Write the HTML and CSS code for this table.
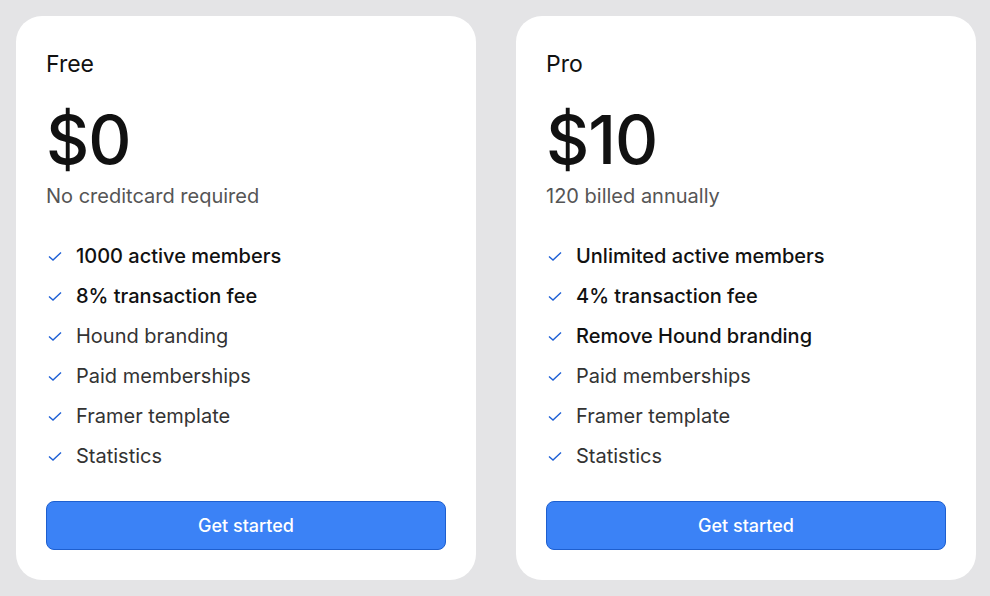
FILE: index.html
```html
<!doctype html>
<html lang="en">
<head>
    <meta charset="UTF-8">
    <meta name="viewport" content="width=device-width, initial-scale=1.0">
    <title>Pricing</title>
    <link rel="stylesheet" href="styles.css">
</head>
<body>
<div class="plans">
    <div class="plan">
        <div class="plan_name">Free</div>
        <div class="plan_price">$0</div>
        <div class="plan_note">No creditcard required</div>
        <ul class="features">
            <li class="strong"><svg class="check" viewBox="0 0 16 16"><polyline points="2,8.5 6,12 14,4.5"/></svg>1000 active members</li>
            <li class="strong"><svg class="check" viewBox="0 0 16 16"><polyline points="2,8.5 6,12 14,4.5"/></svg>8% transaction fee</li>
            <li><svg class="check" viewBox="0 0 16 16"><polyline points="2,8.5 6,12 14,4.5"/></svg>Hound branding</li>
            <li><svg class="check" viewBox="0 0 16 16"><polyline points="2,8.5 6,12 14,4.5"/></svg>Paid memberships</li>
            <li><svg class="check" viewBox="0 0 16 16"><polyline points="2,8.5 6,12 14,4.5"/></svg>Framer template</li>
            <li><svg class="check" viewBox="0 0 16 16"><polyline points="2,8.5 6,12 14,4.5"/></svg>Statistics</li>
        </ul>
        <button class="start_btn">Get started</button>
    </div>
    <div class="plan">
        <div class="plan_name">Pro</div>
        <div class="plan_price">$10</div>
        <div class="plan_note">120 billed annually</div>
        <ul class="features">
            <li class="strong"><svg class="check" viewBox="0 0 16 16"><polyline points="2,8.5 6,12 14,4.5"/></svg>Unlimited active members</li>
            <li class="strong"><svg class="check" viewBox="0 0 16 16"><polyline points="2,8.5 6,12 14,4.5"/></svg>4% transaction fee</li>
            <li class="strong"><svg class="check" viewBox="0 0 16 16"><polyline points="2,8.5 6,12 14,4.5"/></svg>Remove Hound branding</li>
            <li><svg class="check" viewBox="0 0 16 16"><polyline points="2,8.5 6,12 14,4.5"/></svg>Paid memberships</li>
            <li><svg class="check" viewBox="0 0 16 16"><polyline points="2,8.5 6,12 14,4.5"/></svg>Framer template</li>
            <li><svg class="check" viewBox="0 0 16 16"><polyline points="2,8.5 6,12 14,4.5"/></svg>Statistics</li>
        </ul>
        <button class="start_btn">Get started</button>
    </div>
</div>
</body>
</html>
```

FILE: styles.css
```css
body {
    margin: 0;
    background-color: #e4e4e6;
    font-family: Inter, "Noto Sans", sans-serif;
    color: #111;
}

.plans {
    display: flex;
    gap: 40px;
    padding: 16px 0 16px 16px;
}

.plan {
    flex-shrink: 0;
    width: 460px;
    box-sizing: border-box;
    background-color: #fff;
    border-radius: 26px;
    padding: 34px 30px 30px;
    display: flex;
    flex-direction: column;
}

.plan_name {
    font-size: 23px;
    line-height: 28px;
}

.plan_price {
    margin-top: 28px;
    font-size: 67px;
    line-height: 68px;
    font-weight: 500;
    letter-spacing: -1px;
}

.plan_note {
    margin-top: 10px;
    font-size: 20px;
    line-height: 24px;
    color: #555;
}

.features {
    list-style: none;
    margin: 28px 0 0;
    padding: 0;
}

.features li {
    display: flex;
    align-items: center;
    height: 40px;
    font-size: 20px;
    color: #333;
}

.features li.strong {
    color: #111;
    font-weight: 450;
}

.check {
    width: 16px;
    height: 16px;
    margin: 0 13px 0 1px;
    fill: none;
    stroke: #1d5fd6;
    stroke-width: 1.4;
}

.start_btn {
    margin-top: 25px;
    height: 49px;
    border: 1px solid #1e5fcf;
    border-radius: 8px;
    background-color: #3b82f6;
    color: #fff;
    font-family: inherit;
    font-size: 18px;
    font-weight: 500;
}
```
